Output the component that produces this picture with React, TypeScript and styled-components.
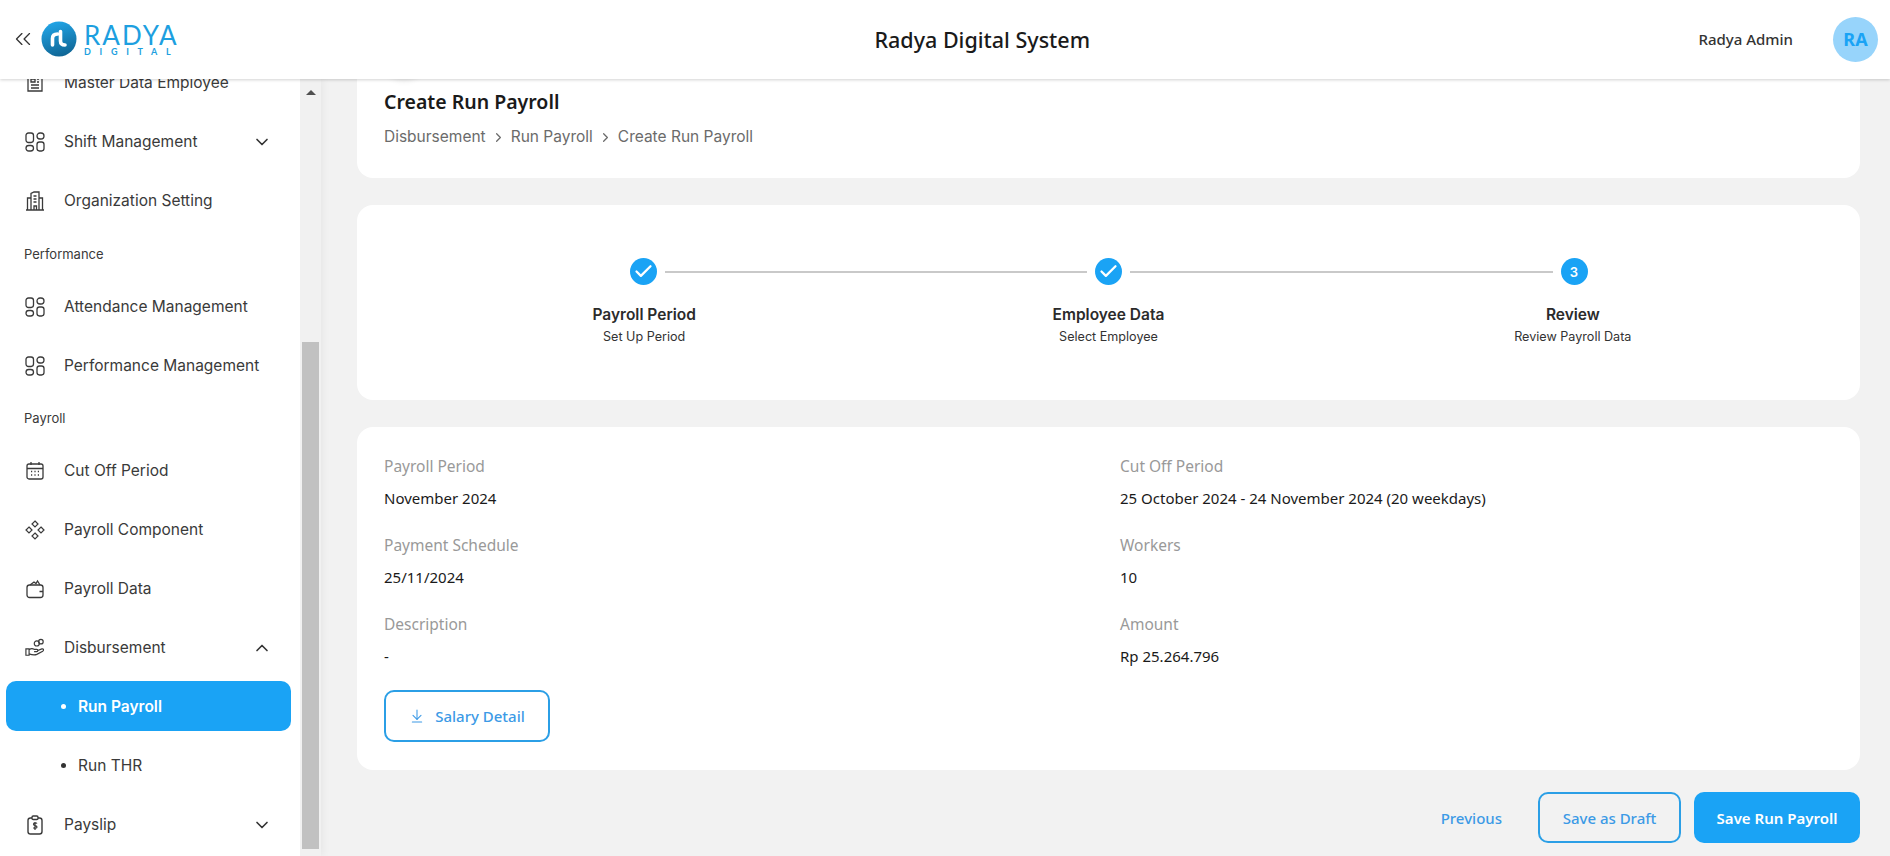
import React from "react";
import styled, { createGlobalStyle } from "styled-components";
import { ChevronDown, ChevronUp, ChevronRight, ChevronsLeft, Check, ArrowDownToLine } from "lucide-react";

const BLUE = "#1aa3f5";

const GlobalStyle = createGlobalStyle`
  html, body { margin: 0; padding: 0; height: 100%; }
  body { font-family: "Noto Sans", "Open Sans", sans-serif; background: #f2f2f2; color: #1a1a1a; }
  * { box-sizing: border-box; }
`;

const GridIcon = () => (
  <svg width="20" height="20" viewBox="0 0 20 20" fill="none" stroke="#3a3a3a" strokeWidth="1.3">
    <rect x="1" y="1" width="7.500" height="9.500" rx="2.400" />
    <rect x="12" y="1" width="7" height="6" rx="3" />
    <rect x="1" y="13.500" width="7.500" height="5.500" rx="2.750" />
    <rect x="12" y="10" width="7" height="9" rx="2.400" />
  </svg>
);

const DocIcon = () => (
  <svg width="20" height="20" viewBox="0 0 20 20" fill="none" stroke="#3a3a3a" strokeWidth="1.3">
    <path d="M3 2h14v16H3z" />
    <path d="M6 6h4v3H6zM6 12h8M6 15h8M12 6h2M12 9h2" />
  </svg>
);

const BuildingIcon = () => (
  <svg width="20" height="20" viewBox="0 0 20 20" fill="none" stroke="#3a3a3a" strokeWidth="1.3">
    <path d="M1 19h18M6 19V2.500L9 1h5v18M6 7H2.500v12M14 7h3.500v12" />
    <path d="M8.500 5h3M8.500 8h3M8.500 11h3M9 19v-4h2.500v4" />
  </svg>
);

const CalendarIcon = () => (
  <svg width="20" height="20" viewBox="0 0 20 20" fill="none" stroke="#3a3a3a" strokeWidth="1.3">
    <rect x="2" y="3" width="16" height="15" rx="2" />
    <path d="M2 7.500h16M6 1v3M14 1v3" />
    <path d="M6 10.500h1.200M9.400 10.500h1.200M12.800 10.500H14M6 14h1.200M9.400 14h1.200M12.800 14H14" strokeWidth="1.500" />
  </svg>
);

const DiamondsIcon = () => (
  <svg width="20" height="20" viewBox="0 0 20 20" fill="none" stroke="#3a3a3a" strokeWidth="1.2">
    <path d="M10 1l3 3-3 3-3-3zM4 7l3 3-3 3-3-3zM16 7l3 3-3 3-3-3zM10 13l3 3-3 3-3-3z" />
  </svg>
);

const WalletIcon = () => (
  <svg width="20" height="20" viewBox="0 0 20 20" fill="none" stroke="#3a3a3a" strokeWidth="1.3">
    <rect x="2" y="6" width="16" height="12.500" rx="2.500" />
    <path d="M5 6l4-3 2 1.500L12.500 2 15 6M18 12.500h-3.500" />
  </svg>
);

const HandCoinsIcon = () => (
  <svg width="22" height="20" viewBox="0 0 22 20" fill="none" stroke="#3a3a3a" strokeWidth="1.3">
    <circle cx="13" cy="5" r="2.800" />
    <circle cx="17.500" cy="3" r="2.500" />
    <path d="M1 11h3.500v7H1zM4.500 12c2-1.500 4-1.500 5.500-.5h3c1.500 0 1.500 2.500 0 2.500H10M13.500 13l5-2c2-.5 2.500 1.500 1 2.500L13 17c-2.500 1-5.500.5-8.500-.5" />
  </svg>
);

const SlipIcon = () => (
  <svg width="20" height="20" viewBox="0 0 20 20" fill="none" stroke="#3a3a3a" strokeWidth="1.400">
    <rect x="3" y="3" width="14" height="16" rx="2.500" />
    <rect x="7" y="1" width="6" height="3.500" rx="1.200" fill="#fff" />
    <path d="M12 8.500c-.6-.8-3.500-1-3.500.7 0 1.800 3.500 1 3.500 2.800 0 1.600-2.900 1.500-3.600.6M10 7v8" strokeWidth="1.200" />
  </svg>
);

const LogoMark = () => (
  <svg width="36" height="36" viewBox="0 0 36 36">
    <defs>
      <linearGradient id="logoFill" x1="0.300" y1="0" x2="0.600" y2="1">
        <stop offset="0" stopColor="#22a6e8" />
        <stop offset="1" stopColor="#0f6594" />
      </linearGradient>
    </defs>
    <circle cx="18" cy="18" r="17.500" fill="url(#logoFill)" />
    <path d="M11.500 24v-6.500c0-3 2-4.500 5-4.500M19.500 10.500v9.500c0 3 2 4 4.500 4" fill="none" stroke="#fff" strokeWidth="3.600" strokeLinecap="round" />
  </svg>
);

const Page = styled.div`
  height: 100vh;
  display: flex;
  flex-direction: column;
  overflow: hidden;
`;

const Header = styled.header`
  height: 79px;
  flex: none;
  display: flex;
  align-items: center;
  background: #fff;
  box-shadow: 0 1px 3px rgba(0, 0, 0, 0.18);
  position: relative;
  z-index: 2;
  padding: 0 12px 1px 0;
`;

const Brand = styled.div`
  width: 266px;
  padding-left: 10px;
  display: flex;
  align-items: center;
  color: #333;
`;

const LogoMarkWrap = styled.div`
  display: flex;
  margin-left: 5px;
  margin-right: 7px;
`;

const LogoWords = styled.div`
  display: flex;
  flex-direction: column;
  margin-top: 2px;
  color: #1d9fe0;
  font-family: "Lato", sans-serif;
`;

const LogoName = styled.span`
  font-size: 26px;
  line-height: 22px;
  font-weight: 400;
  letter-spacing: 2px;
`;

const LogoSub = styled.span`
  font-size: 9px;
  line-height: 11px;
  font-weight: 700;
  letter-spacing: 8.700px;
`;

const AppTitle = styled.h1`
  flex: 1;
  margin: 0;
  text-align: center;
  font-size: 21.500px;
  font-weight: 500;
  color: #1a1a1a;
`;

const UserName = styled.span`
  font-size: 15px;
  font-weight: 500;
  color: #333;
  margin-right: 40px;
`;

const Avatar = styled.div`
  width: 45px;
  height: 45px;
  border-radius: 50%;
  background: #97d4fb;
  color: ${BLUE};
  font-size: 18px;
  font-weight: 700;
  display: flex;
  align-items: center;
  justify-content: center;
`;

const Body = styled.div`
  flex: 1;
  min-height: 0;
  display: flex;
`;

const Aside = styled.aside`
  width: 321px;
  flex: none;
  display: flex;
  box-shadow: 2px 0 8px rgba(0, 0, 0, 0.05);
`;

const MenuPane = styled.nav`
  width: 300px;
  background: #fff;
  overflow: hidden;
  font-family: "Inter", sans-serif;
`;

const MenuList = styled.div`
  margin-top: -26px;
  display: flex;
  flex-direction: column;
`;

const MenuRow = styled.div`
  height: 59px;
  flex: none;
  padding: 0 28px 0 25px;
  display: flex;
  align-items: center;
  gap: 19px;
  font-size: 15.500px;
  color: #3a3a3a;
`;

const MenuText = styled.span`
  flex: 1;
`;

const IconSlot = styled.span`
  width: 20px;
  display: flex;
  justify-content: center;
`;

const GroupLabel = styled.div<{ $h: number }>`
  height: ${(p) => p.$h}px;
  flex: none;
  padding: 0 24px;
  display: flex;
  align-items: center;
  font-size: 13px;
  color: #3a3a3a;
`;

const SubRow = styled.div<{ $active?: boolean }>`
  height: ${(p) => (p.$active ? "50px" : "59px")};
  margin: ${(p) => (p.$active ? "4px 9px 5px 6px" : "0 9px 0 6px")};
  padding-left: 55px;
  display: flex;
  align-items: center;
  gap: 12px;
  font-size: 15.500px;
  font-weight: ${(p) => (p.$active ? 600 : 400)};
  color: ${(p) => (p.$active ? "#fff" : "#3a3a3a")};
  background: ${(p) => (p.$active ? BLUE : "transparent")};
  border-radius: 10px;
`;

const Bullet = styled.span<{ $active?: boolean }>`
  width: 5px;
  height: 5px;
  border-radius: 50%;
  background: ${(p) => (p.$active ? "#fff" : "#333")};
`;

const ScrollTrack = styled.div`
  width: 21px;
  background: #f1f1f1;
  padding: 0 2px 7px;
  display: flex;
  flex-direction: column;
  align-items: center;
`;

const ScrollArrow = styled.span`
  margin-top: 11px;
  width: 0;
  height: 0;
  border-left: 5px solid transparent;
  border-right: 5px solid transparent;
  border-bottom: 5px solid #505050;
`;

const ScrollThumb = styled.div`
  margin-top: auto;
  width: 100%;
  height: 507px;
  background: #c1c1c1;
`;

const Main = styled.main`
  flex: 1;
  min-width: 0;
  padding: 0 30px 0 36px;
  display: flex;
  flex-direction: column;
  gap: 27px;
`;

const Card = styled.section`
  background: #fff;
  border-radius: 16px;
`;

const TitleCard = styled(Card)`
  margin-top: -62px;
  padding: 22px 27px 29px;
`;

const BackButton = styled.div`
  width: 40px;
  height: 40px;
  border-radius: 50%;
  background: #fff;
  box-shadow: 0 2px 6px rgba(0, 0, 0, 0.08);
  margin-bottom: 9px;
`;

const PageTitle = styled.h2`
  margin: 0 0 9px;
  font-size: 19.500px;
  line-height: 28px;
  font-weight: 600;
  color: #1a1a1a;
`;

const Crumbs = styled.div`
  display: flex;
  align-items: center;
  gap: 5px;
  font-family: "Inter", sans-serif;
  font-size: 15.500px;
  line-height: 24px;
  color: #6b6b6b;
`;

const StepperCard = styled(Card)`
  height: 195px;
  padding-top: 53px;
  display: flex;
  flex-direction: column;
  align-items: center;
`;

const StepTrack = styled.div`
  width: 958px;
  display: flex;
  align-items: center;
`;

const StepDot = styled.div`
  width: 27px;
  height: 27px;
  flex: none;
  border-radius: 50%;
  background: ${BLUE};
  color: #fff;
  font-family: "Inter", sans-serif;
  font-size: 13px;
  font-weight: 600;
  display: flex;
  align-items: center;
  justify-content: center;
`;

const StepLine = styled.div`
  flex: 1;
  height: 2px;
  margin: 0 8px;
  background: #c9c9c9;
`;

const StepLabels = styled.div`
  width: 1393px;
  margin-top: 17px;
  display: grid;
  grid-template-columns: repeat(3, 1fr);
  font-family: "Inter", sans-serif;
  text-align: center;
`;

const StepName = styled.div`
  font-size: 15.500px;
  line-height: 25px;
  font-weight: 600;
  color: #2b2b2b;
`;

const StepHint = styled.div`
  font-size: 12.600px;
  line-height: 20px;
  color: #333;
`;

const DetailCard = styled(Card)`
  padding: 27px 27px 28px;
`;

const DetailGrid = styled.div`
  display: grid;
  grid-template-columns: 736px 1fr;
  row-gap: 23px;
`;

const Label = styled.div`
  font-size: 15.500px;
  line-height: 24px;
  color: #999;
`;

const Value = styled.div`
  margin-top: 8px;
  font-size: 15px;
  line-height: 24px;
  color: #1a1a1a;
`;

const OutlineButton = styled.button`
  height: 52px;
  display: inline-flex;
  align-items: center;
  justify-content: center;
  background: transparent;
  border: 2px solid #2b9fe6;
  border-radius: 10px;
  font-family: "Noto Sans", sans-serif;
  font-size: 15px;
  font-weight: 500;
  color: #3c9ae6;
`;

const SalaryButton = styled(OutlineButton)`
  width: 166px;
  gap: 10px;
  margin-top: 22px;
`;

const DraftButton = styled(OutlineButton)`
  height: 51px;
  width: 143px;
`;

const Footer = styled.div`
  display: flex;
  justify-content: flex-end;
  align-items: center;
  gap: 13px;
  margin-top: -5px;
`;

const TextButton = styled.button`
  margin-right: 23px;
  padding: 0;
  background: none;
  border: 0;
  font-family: "Noto Sans", sans-serif;
  font-size: 15px;
  font-weight: 500;
  color: #3c9ae6;
`;

const PrimaryButton = styled.button`
  width: 166px;
  height: 51px;
  background: ${BLUE};
  border: 0;
  border-radius: 10px;
  font-family: "Noto Sans", sans-serif;
  font-size: 15px;
  font-weight: 600;
  color: #fff;
`;

const details = [
  ["Payroll Period", "November 2024"],
  ["Cut Off Period", "25 October 2024 - 24 November 2024 (20 weekdays)"],
  ["Payment Schedule", "25/11/2024"],
  ["Workers", "10"],
  ["Description", "-"],
  ["Amount", "Rp 25.264.796"],
];

const steps = [
  ["Payroll Period", "Set Up Period"],
  ["Employee Data", "Select Employee"],
  ["Review", "Review Payroll Data"],
];

const Item: React.FC<{ icon: React.ReactNode; text: string; chevron?: "up" | "down" }> = ({
  icon,
  text,
  chevron,
}) => (
  <MenuRow>
    <IconSlot>{icon}</IconSlot>
    <MenuText>{text}</MenuText>
    {chevron === "down" && <ChevronDown size={20} color="#333" />}
    {chevron === "up" && <ChevronUp size={20} color="#333" />}
  </MenuRow>
);

export default function App() {
  return (
    <Page>
      <GlobalStyle />
      <Header>
        <Brand>
          <ChevronsLeft size={26} strokeWidth={1.2} />
          <LogoMarkWrap>
            <LogoMark />
          </LogoMarkWrap>
          <LogoWords>
            <LogoName>RADYA</LogoName>
            <LogoSub>DIGITAL</LogoSub>
          </LogoWords>
        </Brand>
        <AppTitle>Radya Digital System</AppTitle>
        <UserName>Radya Admin</UserName>
        <Avatar>RA</Avatar>
      </Header>
      <Body>
        <Aside>
          <MenuPane>
            <MenuList>
              <Item icon={<DocIcon />} text="Master Data Employee" />
              <Item icon={<GridIcon />} text="Shift Management" chevron="down" />
              <Item icon={<BuildingIcon />} text="Organization Setting" />
              <GroupLabel $h={47}>Performance</GroupLabel>
              <Item icon={<GridIcon />} text="Attendance Management" />
              <Item icon={<GridIcon />} text="Performance Management" />
              <GroupLabel $h={46}>Payroll</GroupLabel>
              <Item icon={<CalendarIcon />} text="Cut Off Period" />
              <Item icon={<DiamondsIcon />} text="Payroll Component" />
              <Item icon={<WalletIcon />} text="Payroll Data" />
              <Item icon={<HandCoinsIcon />} text="Disbursement" chevron="up" />
              <SubRow $active>
                <Bullet $active />
                Run Payroll
              </SubRow>
              <SubRow>
                <Bullet />
                Run THR
              </SubRow>
              <Item icon={<SlipIcon />} text="Payslip" chevron="down" />
            </MenuList>
          </MenuPane>
          <ScrollTrack>
            <ScrollArrow />
            <ScrollThumb />
          </ScrollTrack>
        </Aside>
        <Main>
          <TitleCard>
            <BackButton />
            <PageTitle>Create Run Payroll</PageTitle>
            <Crumbs>
              Disbursement
              <ChevronRight size={15} />
              Run Payroll
              <ChevronRight size={15} />
              Create Run Payroll
            </Crumbs>
          </TitleCard>
          <StepperCard>
            <StepTrack>
              <StepDot>
                <Check size={21} strokeWidth={2.6} />
              </StepDot>
              <StepLine />
              <StepDot>
                <Check size={21} strokeWidth={2.6} />
              </StepDot>
              <StepLine />
              <StepDot>3</StepDot>
            </StepTrack>
            <StepLabels>
              {steps.map(([name, hint]) => (
                <div key={name}>
                  <StepName>{name}</StepName>
                  <StepHint>{hint}</StepHint>
                </div>
              ))}
            </StepLabels>
          </StepperCard>
          <DetailCard>
            <DetailGrid>
              {details.map(([label, value]) => (
                <div key={label}>
                  <Label>{label}</Label>
                  <Value>{value}</Value>
                </div>
              ))}
            </DetailGrid>
            <SalaryButton>
              <ArrowDownToLine size={16} strokeWidth={1.6} />
              Salary Detail
            </SalaryButton>
          </DetailCard>
          <Footer>
            <TextButton>Previous</TextButton>
            <DraftButton>Save as Draft</DraftButton>
            <PrimaryButton>Save Run Payroll</PrimaryButton>
          </Footer>
        </Main>
      </Body>
    </Page>
  );
}
